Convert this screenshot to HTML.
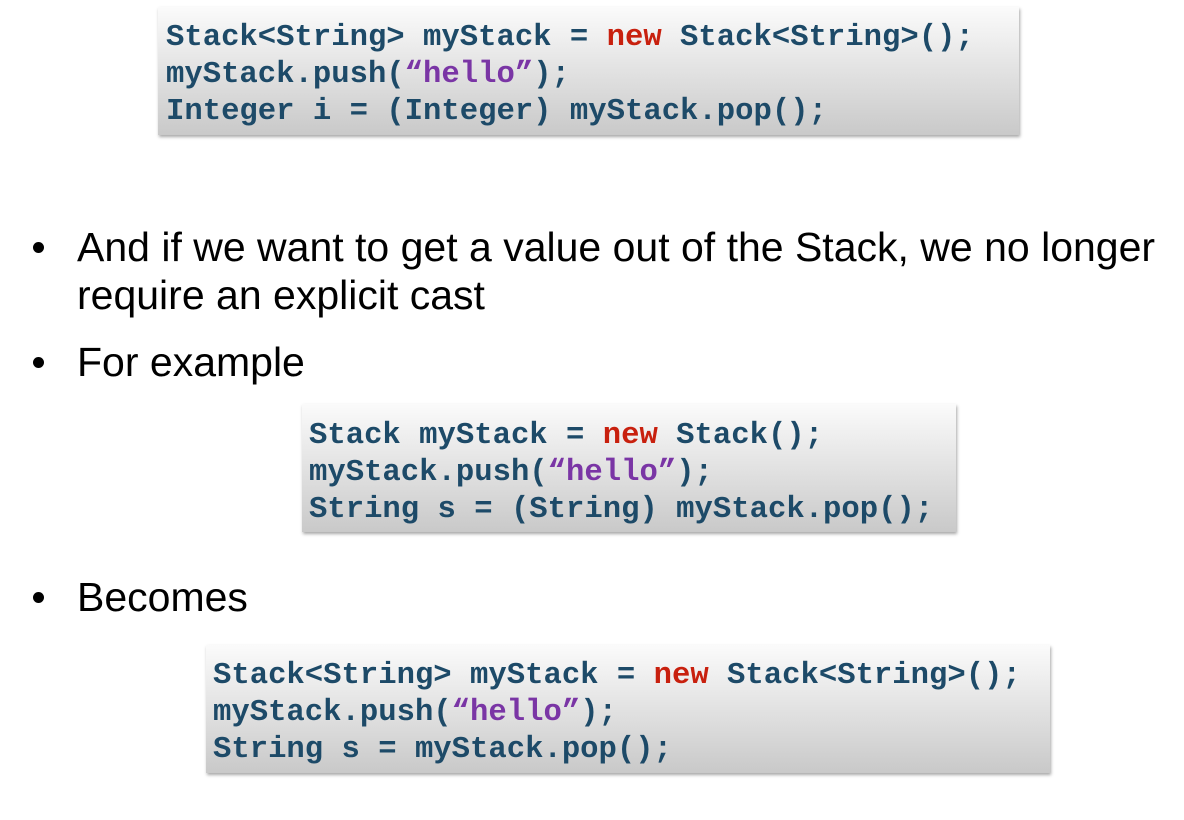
<!DOCTYPE html>
<html><head><meta charset="utf-8"><style>
body{margin:0;width:1184px;height:820px;background:#fff;position:relative;overflow:hidden}
.box{position:absolute;background:linear-gradient(#fbfbfb,#c9c9c9);box-shadow:1px 2px 3px rgba(0,0,0,.35)}
.c{position:absolute;font-family:"Liberation Mono",monospace;font-weight:bold;font-size:30.6px;line-height:37px;color:#1d4a68;white-space:pre;letter-spacing:0}
.r{color:#c8200e}.p{color:#7a35a5}
.t{position:absolute;font-family:"Liberation Sans",Arial,sans-serif;font-size:41px;line-height:48px;color:#000;white-space:pre}
.b{position:absolute;left:33px;width:11px;height:11px;border-radius:50%;background:#000}
</style></head><body>
<div class="box" style="left:158px;top:7px;width:861px;height:128px"></div>
<div class="c" style="left:166px;top:20px">Stack&lt;String&gt; myStack = <span class="r">new</span> Stack&lt;String&gt;();
myStack.push(<span class="p">“hello”</span>);
Integer i = (Integer) myStack.pop();</div>

<div class="b" style="top:242px"></div>
<div class="t" style="left:77px;top:223px">And if we want to get a value out of the Stack, we no longer
require an explicit cast</div>
<div class="b" style="top:357px"></div>
<div class="t" style="left:77px;top:338px">For example</div>

<div class="box" style="left:302px;top:404px;width:654px;height:128px"></div>
<div class="c" style="left:309px;top:418px">Stack myStack = <span class="r">new</span> Stack();
myStack.push(<span class="p">“hello”</span>);
String s = (String) myStack.pop();</div>

<div class="b" style="top:592px"></div>
<div class="t" style="left:77px;top:573px">Becomes</div>

<div class="box" style="left:206px;top:645px;width:844px;height:128px"></div>
<div class="c" style="left:213px;top:658px">Stack&lt;String&gt; myStack = <span class="r">new</span> Stack&lt;String&gt;();
myStack.push(<span class="p">“hello”</span>);
String s = myStack.pop();</div>
</body></html>
